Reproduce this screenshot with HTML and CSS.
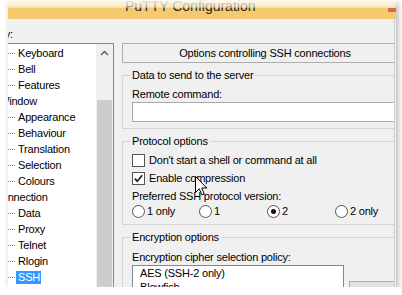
FILE: index.html
```html
<!DOCTYPE html>
<html>
<head>
<meta charset="utf-8">
<link rel="stylesheet" href="styles.css">
</head>
<body>
<div class="window">
  <div class="titlebar">
    <span class="title">PuTTY Configuration</span>
    <span class="close"></span>
  </div>
  <div class="body">
    <div class="left">
      <div class="cat-label">Category:</div>
      <div class="tree">
        <div class="items">
          <div class="row child"><span class="dots"></span><span class="txt">Keyboard</span></div>
          <div class="row child"><span class="dots"></span><span class="txt">Bell</span></div>
          <div class="row child"><span class="dots"></span><span class="txt">Features</span></div>
          <div class="row top"><span class="txt win">Window</span></div>
          <div class="row child"><span class="dots"></span><span class="txt">Appearance</span></div>
          <div class="row child"><span class="dots"></span><span class="txt">Behaviour</span></div>
          <div class="row child"><span class="dots"></span><span class="txt">Translation</span></div>
          <div class="row child"><span class="dots"></span><span class="txt">Selection</span></div>
          <div class="row child"><span class="dots"></span><span class="txt">Colours</span></div>
          <div class="row top"><span class="txt conn">Connection</span></div>
          <div class="row child"><span class="dots"></span><span class="txt">Data</span></div>
          <div class="row child"><span class="dots"></span><span class="txt">Proxy</span></div>
          <div class="row child"><span class="dots"></span><span class="txt">Telnet</span></div>
          <div class="row child"><span class="dots"></span><span class="txt">Rlogin</span></div>
          <div class="row child sel"><span class="dots short"></span><span class="txt">SSH</span></div>
        </div>
        <div class="scrollbar">
          <div class="sb-btn"><svg width="9" height="6" viewBox="0 0 9 6"><polyline points="1,5 4.5,1.5 8,5" fill="none" stroke="#606060" stroke-width="1.5"/></svg></div>
          <div class="sb-track"></div>
          <div class="sb-thumb"></div>
        </div>
      </div>
    </div>
    <div class="right">
      <div class="right-inner">
        <div class="header">Options controlling SSH connections</div>
        <div class="group">
          <div class="legend">Data to send to the server</div>
          <div class="line gap5">Remote command:</div>
          <div class="textbox"></div>
        </div>
        <div class="group">
          <div class="legend">Protocol options</div>
          <div class="check-row gap5"><span class="cb"></span><span>Don't start a shell or command at all</span></div>
          <div class="check-row gap4"><span class="cb"><svg width="11" height="11" viewBox="0 0 11 11"><polyline points="1.8,5.6 4.3,8.2 9.2,2.2" fill="none" stroke="#222" stroke-width="1.7"/></svg></span><span>Enable compression</span></div>
          <div class="line gap4">Preferred SSH protocol version:</div>
          <div class="radios">
            <div class="radio"><span class="rb"></span><span>1 only</span></div>
            <div class="radio"><span class="rb"></span><span>1</span></div>
            <div class="radio"><span class="rb on"><span class="dot"></span></span><span>2</span></div>
            <div class="radio"><span class="rb"></span><span>2 only</span></div>
          </div>
        </div>
        <div class="group">
          <div class="legend">Encryption options</div>
          <div class="line gap6">Encryption cipher selection policy:</div>
          <div class="list-row">
            <div class="listbox">
              <div class="li">AES (SSH-2 only)</div>
              <div class="li">Blowfish</div>
              <div class="li">3DES</div>
            </div>
            <div class="btn"></div>
          </div>
        </div>
      </div>
    </div>
  </div>
  <div class="fade"></div>
  <svg class="cursor" width="13" height="21" viewBox="0 0 13 21"><path d="M0.5,0.5 L0.5,16.5 L4.3,12.8 L6.9,18.9 L9.2,17.9 L6.7,12 L11.8,12 Z" fill="#fff" stroke="#000" stroke-width="1" stroke-linejoin="miter"/></svg>
</div>
</body>
</html>
```
FILE: styles.css
```css
* { box-sizing: border-box; }
html, body { margin: 0; padding: 0; background: #fff; }
body {
  font-family: "Liberation Sans", Arial, sans-serif;
  font-size: 11px;
  letter-spacing: -0.2px;
  color: #000;
}
.window {
  position: relative;
  margin-left: 8px;
  width: 388px;
  height: 287px;
  background: #f0f0f0;
  overflow: hidden;
  box-shadow: 2px 3px 6px rgba(0,0,0,0.3);
}
.titlebar {
  height: 19px;
  background: #f5c96e;
  display: flex;
  justify-content: space-between;
  align-items: flex-start;
}
.title {
  padding-left: 117px;
  margin-top: -2px;
  font-size: 14px;
  line-height: 16px;
  letter-spacing: 0;
  color: #2a2a2a;
  white-space: nowrap;
}
.close {
  width: 8px;
  height: 4px;
  margin-top: 8px;
  background: #d06a5a;
}
.fade {
  position: absolute;
  left: 0; top: 0; right: 0;
  height: 9px;
  background: linear-gradient(to bottom, rgba(255,255,255,0.9) 0, rgba(255,255,255,0.55) 7px, rgba(255,255,255,0) 8.5px);
}
.body {
  display: flex;
  height: 268px;
}
.left {
  width: 106px;
  flex: none;
  display: flex;
  flex-direction: column;
  padding-top: 8px;
}
.cat-label {
  height: 14px;
  line-height: 14px;
  margin-left: -41px;
  margin-bottom: 2px;
  white-space: nowrap;
}
.tree {
  flex: 1;
  display: flex;
  background: #fff;
  border-top: 1px solid #828790;
  border-right: 1px solid #828790;
  overflow: hidden;
}
.items {
  flex: 1;
  padding-top: 1px;
  overflow: hidden;
}
.row {
  height: 16px;
  line-height: 16px;
  display: flex;
  align-items: center;
  white-space: nowrap;
}
.dots {
  flex: none;
  width: 7px;
  height: 1px;
  margin-right: 3px;
  background: repeating-linear-gradient(to right, #8a8a8a 0 1px, transparent 1px 2px);
}
.dots.short { margin-right: 1px; }
.row.top .txt.win { margin-left: -9px; }
.row.top .txt.conn { margin-left: -14px; }
.row.sel .txt {
  background: #3399ff;
  color: #fff;
  line-height: 13px;
  padding: 0 1px 0 2px;
}
.scrollbar {
  width: 17px;
  flex: none;
  background: #f0f0f0;
  display: flex;
  flex-direction: column;
}
.sb-btn {
  height: 17px;
  display: flex;
  align-items: center;
  justify-content: center;
}
.sb-track { height: 39px; }
.sb-thumb {
  flex: 1;
  margin: 0 1px;
  background: #cdcdcd;
}
.right {
  width: 273px;
  flex: none;
  margin-left: 8px;
  border-right: 1px solid #cfcfcf;
  overflow: hidden;
}
.right-inner {
  width: 300px;
  padding-top: 24px;
}
.header {
  width: 286px;
  height: 20px;
  line-height: 18px;
  border: 1px solid #adadad;
  text-align: center;
}
.group {
  width: 290px;
  margin-top: 12px;
  border: 1px solid #d5d5d5;
  padding: 0 0 6px 9px;
}
.legend {
  width: max-content;
  margin: -8px 0 0 -2px;
  padding: 0 2px;
  line-height: 14px;
  background: #f0f0f0;
}
.line { line-height: 14px; white-space: nowrap; }
.gap4 { margin-top: 4px; }
.gap5 { margin-top: 5px; }
.gap6 { margin-top: 6px; }
.textbox {
  margin-top: 1px;
  height: 20px;
  width: 300px;
  background: #fff;
  border: 1px solid #a9a9a9;
}
.check-row {
  display: flex;
  align-items: center;
  height: 14px;
  line-height: 14px;
  white-space: nowrap;
}
.cb {
  flex: none;
  width: 13px;
  height: 13px;
  margin-right: 4px;
  border: 1px solid #555;
  background: #fff;
  display: flex;
  align-items: center;
  justify-content: center;
}
.radios {
  margin-top: 1px;
  display: grid;
  grid-template-columns: 67px 68px 68px auto;
  height: 14px;
}
.radio {
  display: flex;
  align-items: center;
  line-height: 14px;
  white-space: nowrap;
}
.rb {
  flex: none;
  width: 13px;
  height: 13px;
  margin-right: 2px;
  border-radius: 50%;
  border: 1px solid #555;
  background: #fff;
  display: flex;
  align-items: center;
  justify-content: center;
}
.dot {
  width: 5px;
  height: 5px;
  border-radius: 50%;
  background: #111;
}
.list-row {
  margin-top: 1px;
  display: flex;
  align-items: flex-start;
}
.listbox {
  width: 212px;
  height: 44px;
  background: #fff;
  border: 1px solid #828790;
  padding-left: 7px;
}
.li { line-height: 14px; white-space: nowrap; }
.btn {
  margin-left: 5px;
  margin-top: 16px;
  width: 60px;
  height: 23px;
  background: #e1e1e1;
  border: 1px solid #adadad;
}
.cursor {
  position: absolute;
  left: 187px;
  top: 176px;
}
```
